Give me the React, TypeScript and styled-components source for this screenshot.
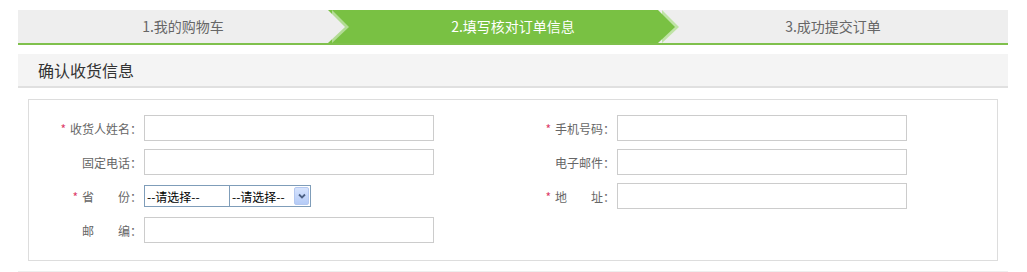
import * as React from "react";
import styled, { createGlobalStyle } from "styled-components";

const GlobalStyle = createGlobalStyle`
  body {
    margin: 0;
    background: #fff;
    font-family: "Noto Sans CJK SC", "Noto Sans", sans-serif;
  }
`;

const SPage = styled.div`
  width: 990px;
  padding: 10px 0 0 18px;
`;

const SSteps = styled.div`
  display: flex;
  height: 33px;
  border-bottom: 2px solid #7fc04c;
`;

const SStep = styled.div<{
  $active?: boolean;
  $width?: number;
  $pad: number;
  $z: number;
  $arrow?: boolean;
}>`
  position: relative;
  z-index: ${(p) => p.$z};
  box-sizing: border-box;
  ${(p) => (p.$width ? `width: ${p.$width}px;` : "flex: 1;")}
  padding-left: ${(p) => p.$pad}px;
  background: ${(p) => (p.$active ? "#79c143" : "#eeeeee")};
  color: ${(p) => (p.$active ? "#fff" : "#666")};
  font-size: 14px;
  line-height: 33px;
  text-align: center;

  &::before,
  &::after {
    content: "";
    display: ${(p) => (p.$arrow ? "block" : "none")};
    position: absolute;
    top: 0;
    width: 0;
    height: 0;
    border-top: 17px solid transparent;
    border-bottom: 16px solid transparent;
    border-left: 17px solid transparent;
  }
  &::before {
    left: calc(100% + 4px);
    border-left-color: ${(p) => (p.$active ? "#bfe3a6" : "#b3dc95")};
  }
  &::after {
    left: 100%;
    border-left-color: ${(p) => (p.$active ? "#79c143" : "#eeeeee")};
  }
`;

const SHeader = styled.div`
  margin-top: 9px;
  height: 32px;
  padding-left: 20px;
  background: #f4f4f4;
  border-bottom: 2px solid #e0e0e0;
  color: #333;
  font-size: 16px;
  line-height: 32px;
`;

const SSection = styled.div`
  padding: 11px 10px 10px;
  border-bottom: 1px solid #eeeeee;
`;

const SBox = styled.div`
  display: flex;
  padding: 15px 0 17px;
  border: 1px solid #dddddd;
`;

const SColumn = styled.div<{ $width?: number }>`
  display: flex;
  flex-direction: column;
  gap: 8px;
  ${(p) => (p.$width ? `width: ${p.$width}px;` : "flex: 1;")}
`;

const SRow = styled.div`
  display: flex;
  align-items: center;
  height: 26px;
`;

const SLabel = styled.label<{ $width: number }>`
  width: ${(p) => p.$width}px;
  margin-right: 2px;
  color: #666;
  font-size: 12px;
  text-align: right;
  white-space: pre;
`;

const SReq = styled.span`
  margin-right: 4px;
  color: #dd3b6b;
`;

const SInput = styled.input`
  box-sizing: border-box;
  width: 290px;
  height: 26px;
  margin: 0;
  border: 1px solid #cccccc;
  outline: none;
`;

const SSelectGroup = styled.div`
  position: relative;
  display: flex;
  height: 22px;
`;

const SSelect = styled.select<{ $width: number }>`
  box-sizing: border-box;
  width: ${(p) => p.$width}px;
  height: 22px;
  margin: 0 0 0 -1px;
  padding: 0 0 0 2px;
  border: 1px solid #7f9db9;
  border-radius: 0;
  background: #fff;
  color: #000;
  font-family: "Noto Sans CJK SC", sans-serif;
  font-size: 12px;
  appearance: none;

  &:first-child {
    margin-left: 0;
  }
`;

const SArrowBtn = styled.span`
  position: absolute;
  top: 2px;
  right: 2px;
  box-sizing: border-box;
  width: 15px;
  height: 18px;
  display: flex;
  align-items: center;
  justify-content: center;
  border: 1px solid #b4c8f0;
  border-radius: 2px;
  background: linear-gradient(#d6e3fd, #b5cbf7);
  pointer-events: none;
`;

const leftRows = [
  { req: true, text: "收货人姓名：" },
  { req: false, text: "固定电话：" },
  { req: true, text: "省　　份：", select: true },
  { req: false, text: "邮　　编：" }
];

const rightRows = [
  { req: true, text: "手机号码：" },
  { req: false, text: "电子邮件：" },
  { req: true, text: "地　　址：" }
];

const FieldRow = (props: any) => {
  const { row, labelWidth } = props;
  return (
    <SRow>
      <SLabel $width={labelWidth}>
        {row.req && <SReq>*</SReq>}
        {row.text}
      </SLabel>
      {row.select ? (
        <SSelectGroup>
          <SSelect $width={86}>
            <option>--请选择--</option>
          </SSelect>
          <SSelect $width={82}>
            <option>--请选择--</option>
          </SSelect>
          <SArrowBtn>
            <svg width="8" height="6" viewBox="0 0 8 6">
              <path d="M1 1.5 L4 4.5 L7 1.5" fill="none" stroke="#4d6185" strokeWidth="1.8" />
            </svg>
          </SArrowBtn>
        </SSelectGroup>
      ) : (
        <SInput type="text" />
      )}
    </SRow>
  );
};

const App = () => {
  return (
    <SPage>
      <GlobalStyle />
      <SSteps>
        <SStep $width={310} $pad={20} $z={3} $arrow>
          1.我的购物车
        </SStep>
        <SStep $width={330} $pad={40} $z={2} $arrow $active>
          2.填写核对订单信息
        </SStep>
        <SStep $pad={0} $z={1}>
          3.成功提交订单
        </SStep>
      </SSteps>
      <SHeader>确认收货信息</SHeader>
      <SSection>
        <SBox>
          <SColumn $width={484}>
            {leftRows.map((row) => (
              <FieldRow key={row.text} row={row} labelWidth={113} />
            ))}
          </SColumn>
          <SColumn>
            {rightRows.map((row) => (
              <FieldRow key={row.text} row={row} labelWidth={102} />
            ))}
          </SColumn>
        </SBox>
      </SSection>
    </SPage>
  );
};

export default App;
